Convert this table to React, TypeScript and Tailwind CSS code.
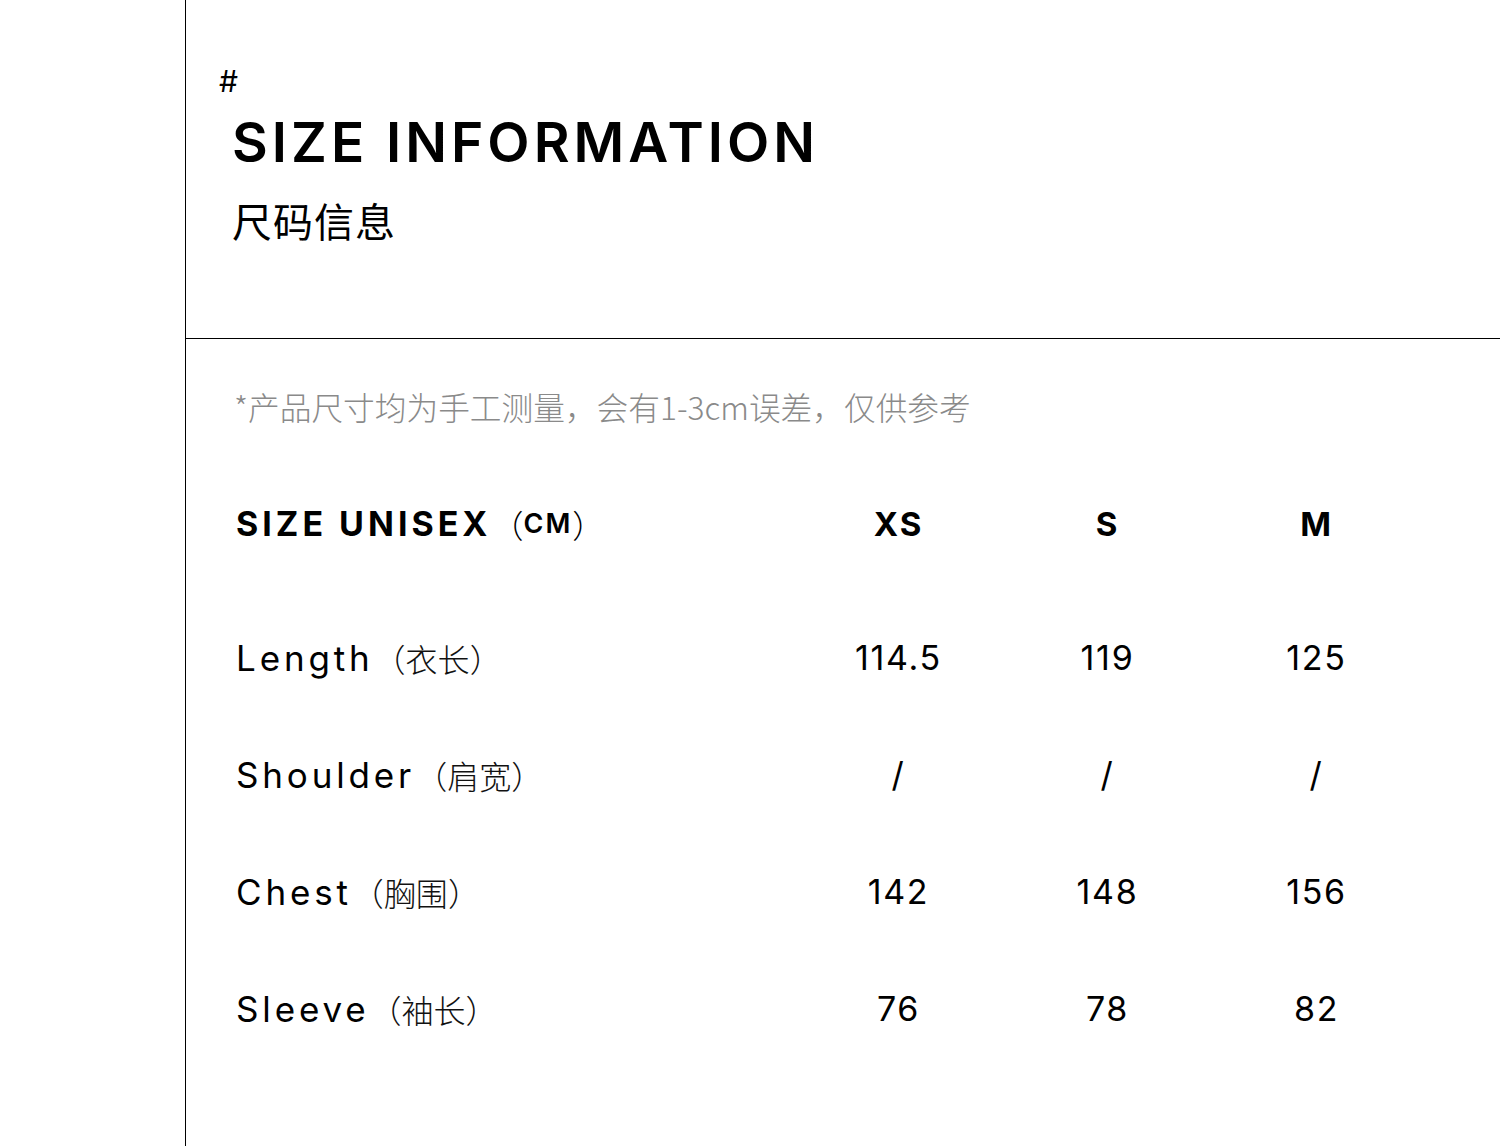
const rows = [
  { en: 'Length', zh: '衣长', values: ['114.5', '119', '125'] },
  { en: 'Shoulder', zh: '肩宽', values: ['/', '/', '/'] },
  { en: 'Chest', zh: '胸围', values: ['142', '148', '156'] },
  { en: 'Sleeve', zh: '袖长', values: ['76', '78', '82'] },
];

const sizes = ['XS', 'S', 'M'];

function Row({ en, zh, values, first }: { en: string; zh: string; values: string[]; first?: boolean }) {
  return (
    <div className={`grid grid-cols-[558px_209px_209px_209px] h-[60px] items-center ${first ? 'mt-[74px]' : 'mt-[57px]'}`}>
      <div className="flex items-center">
        <span className="font-['Inter',sans-serif] text-[35px] leading-[34px] tracking-[0.11em] text-black">{en}</span>
        <span className="font-['Noto_Sans_CJK_SC',sans-serif] text-[32px] leading-[34px] font-light text-[#111]">（{zh}）</span>
      </div>
      {values.map((v, i) => (
        <div key={i} className="text-center font-['Inter',sans-serif] text-[34px] leading-[34px] tracking-[0.05em] text-black">
          {v}
        </div>
      ))}
    </div>
  );
}

export default function App() {
  return (
    <div className="w-[1500px] h-[1146px] bg-white flex overflow-hidden">
      <div className="w-[185px] shrink-0" />
      <div className="flex-1 border-l border-black flex flex-col">
        {/* heading */}
        <header className="h-[339px] shrink-0 border-b border-black pl-[33px] pt-[66px] flex flex-col items-start">
          <div className="font-['Inter',sans-serif] text-[30px] leading-[30px] text-black">#</div>
          <h1 className="mt-[19px] ml-[13px] font-['Inter',sans-serif] text-[55px] leading-[55px] font-semibold tracking-[4px] text-black">
            SIZE INFORMATION
          </h1>
          <div className="mt-[30px] ml-[13px] font-['Noto_Sans_CJK_SC',sans-serif] text-[40px] leading-[40px] tracking-[1px] text-black">
            尺码信息
          </div>
        </header>

        {/* table */}
        <section className="pl-[50px] flex flex-col">
          <p className="mt-[51px] -ml-[2px] font-['Noto_Sans_CJK_SC',sans-serif] text-[31.7px] leading-[32px] font-light text-[#8a8a8a]">
            *产品尺寸均为手工测量，会有1-3cm误差，仅供参考
          </p>

          <div className="mt-[72px] grid grid-cols-[558px_209px_209px_209px] h-[60px] items-center">
            <div className="flex items-center">
              <span className="font-['Inter',sans-serif] text-[34px] leading-[34px] font-bold tracking-[4px] text-black">SIZE UNISEX</span>
              <span className="font-['Noto_Sans_CJK_SC',sans-serif] text-[32px] leading-[34px] font-light text-black">（</span>
              <span className="font-['Inter',sans-serif] text-[27px] leading-[34px] font-semibold tracking-[2px] text-black">CM</span>
              <span className="font-['Noto_Sans_CJK_SC',sans-serif] text-[32px] leading-[34px] font-light text-black">）</span>
            </div>
            {sizes.map((s) => (
              <div key={s} className="text-center font-['Inter',sans-serif] text-[33px] leading-[34px] font-bold tracking-[0.06em] text-black">
                {s}
              </div>
            ))}
          </div>

          {rows.map((r, i) => (
            <Row key={r.en} {...r} first={i === 0} />
          ))}
        </section>
      </div>
    </div>
  );
}
